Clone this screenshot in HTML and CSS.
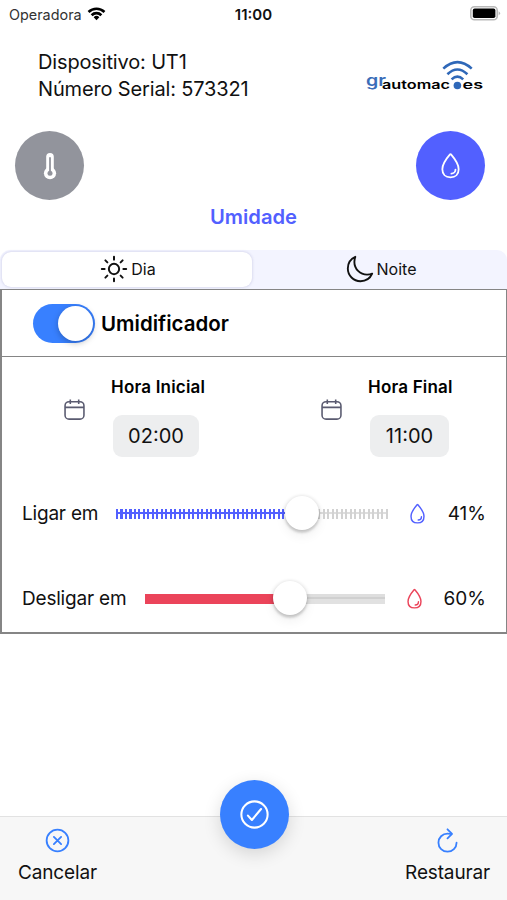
FILE: index.html
```html
<!DOCTYPE html>
<html lang="pt-BR">
  <head>
    <meta charset="UTF-8" />
    <meta name="viewport" content="width=device-width, initial-scale=1" />
    <title>Umidade</title>
    <link rel="stylesheet" href="styles.css" />
  </head>
  <body>
    <svg class="defs" width="0" height="0">
      <symbol id="drop" viewBox="0 0 512 512">
        <path d="M400 320c0 88.37-55.63 144-144 144s-144-55.63-144-144c0-94.83 103.23-222.85 134.89-259.88a12 12 0 0118.23 0C296.77 97.15 400 225.17 400 320z" fill="none" stroke="currentColor" stroke-miterlimit="10" stroke-width="32" />
        <path d="M344 328a72 72 0 01-72 72" fill="none" stroke="currentColor" stroke-linecap="round" stroke-linejoin="round" stroke-width="32" />
      </symbol>
      <symbol id="calendar" viewBox="0 0 20 20">
        <g fill="none" stroke="currentColor" stroke-width="1.5">
          <rect x="1" y="2.6" width="18" height="16.6" rx="3.8" />
          <path d="M1 8h18M6 .4v4.4M14 .4v4.4" />
        </g>
      </symbol>
    </svg>

    <div class="status-bar">
      <div class="carrier">
        <span>Operadora</span>
        <svg width="19" height="15" viewBox="0 0 18 14">
          <path d="M0.6 4.7a12 12 0 0116.8 0l-1.7 1.8a9.5 9.5 0 00-13.4 0zM3.5 7.7a7.8 7.8 0 0111 0l-1.8 1.8a5.3 5.3 0 00-7.4 0zM6.3 10.5a3.9 3.9 0 015.4 0L9 13.3z" />
        </svg>
      </div>
      <div class="clock">11:00</div>
      <svg class="battery" width="31" height="15" viewBox="0 0 31 15">
        <rect x="0.8" y="0.8" width="26.4" height="13" rx="3.6" fill="#fff" stroke="#b9b9b9" stroke-width="1.6" />
        <rect x="2.8" y="2.6" width="22.6" height="9.4" rx="1.8" />
        <path d="M28.6 5.2q3 2.1 0 4.2z" fill="#b9b9b9" />
      </svg>
    </div>

    <header class="header">
      <div class="device">
        <div class="line-device">Dispositivo: UT1</div>
        <div class="line-serial">Número Serial: 573321</div>
      </div>
      <svg class="logo" width="120" height="34" viewBox="0 0 120 34">
        <g class="logo-text" font-size="12">
          <text x="1" y="27" font-size="15" textLength="20" lengthAdjust="spacingAndGlyphs" fill="#3a6db8">gr</text>
          <text x="17" y="29.8" textLength="68" lengthAdjust="spacingAndGlyphs">automac</text>
          <text x="97.5" y="29.8" textLength="20.5" lengthAdjust="spacingAndGlyphs">es</text>
        </g>
        <circle cx="92.4" cy="26.5" r="3.8" fill="#2f68b8" />
        <g fill="none" stroke="#2f68b8" stroke-width="2.6">
          <path d="M78.3 9.6q14.2-12.8 28.4 0M82.4 15.2q10-9.4 20 0M86.6 20.4q5.8-5.4 11.6 0" />
        </g>
      </svg>
    </header>

    <div class="modes">
      <button class="mode mode-temp">
        <svg width="30" height="30" viewBox="0 0 30 30">
          <path d="M15 5.8v16" stroke="#fff" stroke-width="7.6" stroke-linecap="round" />
          <circle cx="15" cy="22.2" r="6.1" fill="#fff" />
          <path d="M15 7v14" stroke="#92949c" stroke-width="1.8" stroke-linecap="round" />
          <circle cx="15" cy="22.2" r="2.5" fill="#92949c" />
        </svg>
      </button>
      <button class="mode mode-hum">
        <svg width="29" height="29"><use href="#drop" /></svg>
      </button>
    </div>

    <h1 class="title">Umidade</h1>

    <div class="segment">
      <div class="tab tab-active">
        <svg width="30" height="30" viewBox="0 0 512 512" fill="none" stroke="currentColor" stroke-width="34" stroke-linecap="round" stroke-miterlimit="10">
          <path d="M256 48v48M256 416v48M403.08 108.92l-33.94 33.94M142.86 369.14l-33.94 33.94M464 256h-48M96 256H48M403.08 403.08l-33.94-33.94M142.86 142.86l-33.94-33.94" />
          <circle cx="256" cy="256" r="88" />
        </svg>
        <span>Dia</span>
      </div>
      <div class="tab tab-night">
        <svg width="30" height="30" viewBox="0 0 512 512" fill="none" stroke="currentColor" stroke-width="32" stroke-linecap="round" stroke-linejoin="round">
          <path d="M160 136c0-30.62 4.51-61.61 16-88C99.57 81.27 48 159.32 48 248c0 119.29 96.71 216 216 216 88.68 0 166.73-51.57 200-128-26.39 11.49-57.38 16-88 16-119.29 0-216-96.71-216-216z" />
        </svg>
        <span>Noite</span>
      </div>
    </div>

    <main class="panel">
      <div class="panel-head">
        <div class="toggle"><div class="knob"></div></div>
        <span class="toggle-label">Umidificador</span>
      </div>

      <div class="times">
        <div class="time">
          <svg class="cal" width="21" height="21"><use href="#calendar" /></svg>
          <div class="time-col">
            <div class="time-label">Hora Inicial</div>
            <div class="time-value">02:00</div>
          </div>
        </div>
        <div class="time">
          <svg class="cal" width="21" height="21"><use href="#calendar" /></svg>
          <div class="time-col">
            <div class="time-label">Hora Final</div>
            <div class="time-value value-end">11:00</div>
          </div>
        </div>
      </div>

      <div class="range-row on">
        <span class="range-label">Ligar em</span>
        <div class="range">
          <div class="ticks"></div>
          <div class="bar" style="width: 68.4%"></div>
          <div class="handle" style="left: 68.4%"></div>
        </div>
        <svg class="range-icon" width="23" height="23"><use href="#drop" /></svg>
        <span class="range-value">41%</span>
      </div>

      <div class="range-row off">
        <span class="range-label">Desligar em</span>
        <div class="range">
          <div class="ticks"></div>
          <div class="bar" style="width: 60.4%"></div>
          <div class="handle" style="left: 60.4%"></div>
        </div>
        <svg class="range-icon" width="23" height="23"><use href="#drop" /></svg>
        <span class="range-value">60%</span>
      </div>
    </main>

    <footer class="footer">
      <div class="action cancel">
        <svg width="29" height="29" viewBox="0 0 512 512" fill="none" stroke="currentColor" stroke-width="32" stroke-linecap="round" stroke-linejoin="round">
          <path d="M448 256c0-106-86-192-192-192S64 150 64 256s86 192 192 192 192-86 192-192z" />
          <path d="M320 320L192 192M192 320l128-128" />
        </svg>
        <span>Cancelar</span>
      </div>
      <button class="confirm">
        <svg width="35" height="35" viewBox="0 0 512 512" fill="none" stroke="currentColor" stroke-width="30" stroke-linecap="round" stroke-linejoin="round">
          <path d="M448 256c0-106-86-192-192-192S64 150 64 256s86 192 192 192 192-86 192-192z" />
          <path d="M352 176L217.6 336 160 272" />
        </svg>
      </button>
      <div class="action restore">
        <svg width="29" height="29" viewBox="0 0 512 512" fill="none" stroke="currentColor" stroke-width="32" stroke-linecap="round">
          <path d="M320 146s24.36-12-64-12a160 160 0 10160 160" />
          <path d="M256 58l80 80-80 80" stroke-linejoin="round" />
        </svg>
        <span>Restaurar</span>
      </div>
    </footer>
  </body>
</html>
```
FILE: styles.css
```css
* {
  box-sizing: border-box;
}
body {
  margin: 0;
  height: 900px;
  overflow: hidden;
  display: flex;
  flex-direction: column;
  background: #fff;
  color: #111;
  font-family: Inter, "Liberation Sans", sans-serif;
  font-size: 19px;
}
button {
  border: none;
  padding: 0;
  display: flex;
  align-items: center;
  justify-content: center;
}
svg {
  display: block;
  flex-shrink: 0;
}
.defs {
  display: none;
}
.status-bar {
  height: 28px;
  padding: 0 6px;
  display: grid;
  grid-template-columns: 1fr auto 1fr;
  align-items: center;
  font-size: 14.4px;
}
.carrier {
  display: flex;
  align-items: center;
  gap: 5px;
  padding-left: 3px;
  color: #333;
}
.carrier svg {
  fill: #000;
  margin-top: -2px;
}
.clock {
  font-size: 15px;
  font-weight: 600;
}
.battery {
  justify-self: end;
  margin-top: -2px;
}
.header {
  height: 103px;
  padding: 20px 22px 0 38px;
  display: flex;
  justify-content: space-between;
  align-items: flex-start;
  line-height: 27px;
}
.device {
  padding-top: 0.5px;
  font-size: 20px;
  letter-spacing: -0.15px;
}
.logo {
  margin-top: 11px;
}
.logo-text {
  font-family: Inter, "Liberation Sans", sans-serif;
  font-weight: 600;
}
.modes {
  height: 69px;
  padding: 0 22px 0 15px;
  display: flex;
  justify-content: space-between;
}
.mode {
  width: 69px;
  height: 69px;
  border-radius: 50%;
  color: #fff;
}
.mode-temp {
  background: #92949c;
}
.mode-hum {
  background: #5260ff;
}
.title {
  margin: 4px 0 0;
  height: 46px;
  line-height: 25px;
  text-align: center;
  font-size: 20.2px;
  font-weight: 600;
  color: #5260ff;
}
.segment {
  height: 39px;
  padding: 2px;
  display: grid;
  grid-template-columns: 250px 1fr;
  background: #f3f4ff;
  border-radius: 10px 10px 0 0;
  font-size: 16px;
}
.tab {
  height: 34px;
  display: flex;
  align-items: center;
  justify-content: center;
  gap: 2px;
}
.tab-active {
  height: 35px;
  padding: 0 0 1px 1px;
  background: #fff;
  border-radius: 9px;
  box-shadow: 0 0 3px rgba(60, 60, 140, 0.25);
}
.tab-night {
  padding-left: 4px;
}
.panel {
  height: 345px;
  border: 2px solid #858585;
  border-width: 1px 1px 2px 2px;
}
.panel-head {
  height: 67px;
  padding-left: 31px;
  display: flex;
  align-items: center;
  gap: 6px;
  border-bottom: 1px solid #858585;
}
.toggle {
  width: 62px;
  height: 39px;
  padding: 2px;
  display: flex;
  justify-content: flex-end;
  background: #3880ff;
  border-radius: 20px;
}
.knob {
  width: 35px;
  height: 35px;
  border-radius: 50%;
  background: #fff;
  box-shadow: 0 2px 6px rgba(0, 0, 0, 0.25);
}
.toggle-label {
  font-size: 20.5px;
  font-weight: 600;
  color: #000;
}
.times {
  height: 114px;
  padding: 19px 0 0 62px;
  display: grid;
  grid-template-columns: 257px 1fr;
}
.time {
  display: flex;
  align-items: flex-start;
  gap: 26px;
}
.cal {
  margin-top: 23px;
  color: #5a5b70;
}
.time-label {
  height: 22px;
  line-height: 22px;
  font-size: 17px;
  letter-spacing: 0.2px;
  font-weight: 600;
  color: #000;
}
.time-value {
  width: 86px;
  height: 42px;
  margin: 17px 0 0 2px;
  line-height: 42px;
  text-align: center;
  font-size: 20px;
  border-radius: 9px;
  background: #edeeef;
}
.value-end {
  width: 79px;
}
.range-row {
  height: 85px;
  padding: 0 20px;
  display: flex;
  align-items: center;
}
.range {
  position: relative;
  flex: 1;
  height: 36px;
}
.on {
  color: #5260ff;
}
.off {
  color: #eb445a;
}
.range-label,
.range-value {
  color: #111;
}
.range-label {
  letter-spacing: -0.2px;
}
.on .range-label {
  width: 94px;
}
.off .range-label {
  width: 123px;
}
.range-icon {
  margin-left: 18px;
}
.range-value {
  width: 57px;
  text-align: right;
}
.off .range-value {
  width: 60px;
}
/* track, filled part and handle are stacked on each other */
.ticks {
  position: absolute;
  top: 13px;
  left: 0;
  width: 100%;
  height: 10px;
  background: repeating-linear-gradient(90deg, #d2d2d2 0 1.5px, transparent 1.5px 4.5px),
    linear-gradient(transparent 3px, #dedede 3px 5px, transparent 5px);
}
.off .ticks {
  background: linear-gradient(#dedede 3px, #d0d0d0 3px 5px, #e1e1e1 5px);
}
.bar {
  position: absolute;
  top: 13px;
  left: 0;
  height: 10px;
}
.on .bar {
  background: repeating-linear-gradient(90deg, #5260ff 0 2px, transparent 2px 4.5px),
    linear-gradient(#fff 3px, #5260ff 3px 5px, #fff 5px);
}
.off .bar {
  background: #eb445a;
}
.handle {
  position: absolute;
  top: 0;
  width: 34px;
  height: 34px;
  margin-left: -17px;
  border-radius: 50%;
  background: #fff;
  box-shadow: 0 3px 2px rgba(0, 0, 0, 0.08), 0 1px 4px rgba(0, 0, 0, 0.22),
    0 6px 12px rgba(0, 0, 0, 0.06);
}
.footer {
  height: 84px;
  margin-top: auto;
  padding: 0 17px 0 18px;
  display: grid;
  grid-template-columns: 1fr 69px 1fr;
  background: #f7f7f7;
  border-top: 1px solid #e2e2e2;
}
.action {
  padding-top: 9px;
  display: flex;
  flex-direction: column;
  align-items: center;
  line-height: 26px;
  letter-spacing: -0.15px;
  gap: 5px;
}
.action svg {
  color: #3880ff;
}
.cancel {
  justify-self: start;
}
.restore {
  justify-self: end;
}
.confirm {
  width: 69px;
  height: 69px;
  margin-top: -37px;
  border-radius: 50%;
  background: #3880ff;
  color: #fff;
  box-shadow: 0 5px 18px rgba(0, 0, 0, 0.14);
}
```
